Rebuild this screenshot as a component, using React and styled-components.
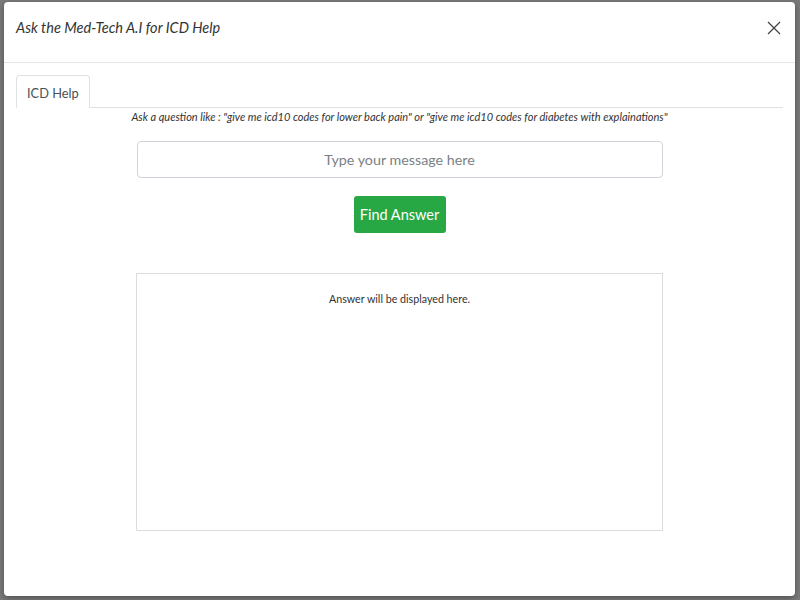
import React from 'react'
import styled, { createGlobalStyle } from 'styled-components'

const GlobalStyle = createGlobalStyle`
  html, body {
    margin: 0;
    padding: 0;
    background: #7a7a7a;
    font-family: Lato, "Open Sans", sans-serif;
    color: #333;
  }
`

const Backdrop = styled.div`
  width: 800px;
  height: 600px;
  padding: 2px 5px 4px 4px;
  box-sizing: border-box;
  overflow: hidden;
`

const Modal = styled.div`
  height: 100%;
  background: #fff;
  border-radius: 4px;
  box-shadow: 0 2px 6px rgba(0, 0, 0, 0.35);
  display: flex;
  flex-direction: column;
`

const Header = styled.div`
  height: 60px;
  border-bottom: 1px solid #e5e5e5;
  display: flex;
  align-items: center;
  justify-content: space-between;
  padding: 0 14px 0 12px;

  h4 {
    margin: 0 0 10px;
    font-size: 14.5px;
    font-style: italic;
    font-weight: 400;
    color: #333;
  }
`

const Close = styled.button`
  border: 0;
  background: none;
  padding: 0;
  margin-bottom: 8px;
  cursor: pointer;
  display: flex;

  svg {
    width: 14px;
    height: 14px;
  }
`

const Body = styled.div`
  padding: 12px 12px 0;
  display: flex;
  flex-direction: column;
  align-items: center;
`

const TabList = styled.ul`
  list-style: none;
  margin: 0;
  padding: 0;
  align-self: stretch;
  display: flex;
  border-bottom: 1px solid #dee2e6;
`

const Tab = styled.li`
  margin-bottom: -1px;
  height: 33px;
  box-sizing: border-box;
  padding: 3px 10px 0;
  display: flex;
  align-items: center;
  font-size: 12.8px;
  color: #495057;
  background: #fff;
  border: 1px solid ${p => (p.$active ? '#dee2e6' : 'transparent')};
  border-bottom-color: ${p => (p.$active ? '#fff' : 'transparent')};
  border-radius: 4px 4px 0 0;
`

const Hint = styled.p`
  margin: 2px 0 0;
  font-size: 11px;
  font-style: italic;
  color: #333;
`

const Input = styled.input`
  margin-top: 18px;
  width: 526px;
  height: 37px;
  box-sizing: border-box;
  border: 1px solid #ced4da;
  border-radius: 4px;
  text-align: center;
  font-family: inherit;
  font-size: 14.3px;
  color: #495057;

  &::placeholder {
    color: #7a7f85;
  }
`

const FindButton = styled.button`
  margin-top: 18px;
  width: 92px;
  height: 37px;
  padding: 0;
  border: 0;
  border-radius: 3px;
  background: #28a745;
  color: #fff;
  font-family: inherit;
  font-size: 14.5px;
  white-space: nowrap;
  cursor: pointer;
`

const AnswerBox = styled.div`
  margin-top: 40px;
  width: 527px;
  height: 258px;
  box-sizing: border-box;
  border: 1px solid #dcdcdc;
  padding-top: 18px;
  text-align: center;
  font-size: 10.7px;
  color: #333;
`

const App = () => {
  return (
    <>
      <GlobalStyle />
      <Backdrop>
        <Modal>
          <Header>
            <h4>Ask the Med-Tech A.I for ICD Help</h4>
            <Close aria-label="Close">
              <svg viewBox="0 0 14 14" fill="none" stroke="#444" strokeWidth="1.3">
                <path d="M1 1L13 13M13 1L1 13" />
              </svg>
            </Close>
          </Header>
          <Body>
            <TabList>
              <Tab $active>ICD Help</Tab>
            </TabList>
            <Hint>
              Ask a question like : "give me icd10 codes for lower back pain" or "give me icd10 codes for diabetes with explainations"
            </Hint>
            <Input placeholder="Type your message here" />
            <FindButton>Find Answer</FindButton>
            <AnswerBox>Answer will be displayed here.</AnswerBox>
          </Body>
        </Modal>
      </Backdrop>
    </>
  )
}

export default App
